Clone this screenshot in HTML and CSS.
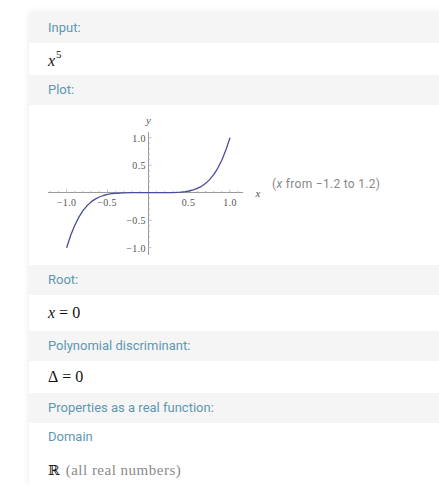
FILE: index.html
```html
<!DOCTYPE html>
<html>
<head>
<meta charset="utf-8">
<link rel="stylesheet" href="styles.css">
</head>
<body>
<div class="card">
  <div class="pod-head">Input:</div>
  <div class="pod-body math input-row"><span class="var">x</span><sup class="exp">5</sup></div>

  <div class="pod-head">Plot:</div>
  <div class="plot-row">
    <svg class="plot" width="243" height="160" viewBox="0 0 243 160">
      <g stroke="#9a9a9a" stroke-width="1" fill="none">
        <line x1="19" y1="87.5" x2="214" y2="87.5"/>
        <line x1="119.5" y1="27" x2="119.5" y2="150"/>
      </g>
      <g stroke="#b0b0b0" stroke-width="0.8">
        <line x1="37.6" y1="87.5" x2="37.6" y2="84.5"/>
        <line x1="78.5" y1="87.5" x2="78.5" y2="84.5"/>
        <line x1="160.2" y1="87.5" x2="160.2" y2="84.5"/>
        <line x1="201" y1="87.5" x2="201" y2="84.5"/>
        <line x1="21.3" y1="87.5" x2="21.3" y2="86"/>
        <line x1="29.5" y1="87.5" x2="29.5" y2="86"/>
        <line x1="45.8" y1="87.5" x2="45.8" y2="86"/>
        <line x1="54" y1="87.5" x2="54" y2="86"/>
        <line x1="62.1" y1="87.5" x2="62.1" y2="86"/>
        <line x1="70.3" y1="87.5" x2="70.3" y2="86"/>
        <line x1="86.6" y1="87.5" x2="86.6" y2="86"/>
        <line x1="94.8" y1="87.5" x2="94.8" y2="86"/>
        <line x1="103" y1="87.5" x2="103" y2="86"/>
        <line x1="111.1" y1="87.5" x2="111.1" y2="86"/>
        <line x1="127.5" y1="87.5" x2="127.5" y2="86"/>
        <line x1="135.6" y1="87.5" x2="135.6" y2="86"/>
        <line x1="143.8" y1="87.5" x2="143.8" y2="86"/>
        <line x1="152" y1="87.5" x2="152" y2="86"/>
        <line x1="168.3" y1="87.5" x2="168.3" y2="86"/>
        <line x1="176.5" y1="87.5" x2="176.5" y2="86"/>
        <line x1="184.7" y1="87.5" x2="184.7" y2="86"/>
        <line x1="192.8" y1="87.5" x2="192.8" y2="86"/>
        <line x1="209.2" y1="87.5" x2="209.2" y2="86"/>
        <line x1="119.5" y1="32.7" x2="122.5" y2="32.7"/>
        <line x1="119.5" y1="60.2" x2="122.5" y2="60.2"/>
        <line x1="119.5" y1="115.2" x2="122.5" y2="115.2"/>
        <line x1="119.5" y1="142.7" x2="122.5" y2="142.7"/>
        <line x1="119.5" y1="38.2" x2="121" y2="38.2"/>
        <line x1="119.5" y1="43.7" x2="121" y2="43.7"/>
        <line x1="119.5" y1="49.2" x2="121" y2="49.2"/>
        <line x1="119.5" y1="54.7" x2="121" y2="54.7"/>
        <line x1="119.5" y1="65.7" x2="121" y2="65.7"/>
        <line x1="119.5" y1="71.2" x2="121" y2="71.2"/>
        <line x1="119.5" y1="76.7" x2="121" y2="76.7"/>
        <line x1="119.5" y1="82.2" x2="121" y2="82.2"/>
        <line x1="119.5" y1="93.2" x2="121" y2="93.2"/>
        <line x1="119.5" y1="98.7" x2="121" y2="98.7"/>
        <line x1="119.5" y1="104.2" x2="121" y2="104.2"/>
        <line x1="119.5" y1="109.7" x2="121" y2="109.7"/>
        <line x1="119.5" y1="120.7" x2="121" y2="120.7"/>
        <line x1="119.5" y1="126.2" x2="121" y2="126.2"/>
        <line x1="119.5" y1="131.7" x2="121" y2="131.7"/>
        <line x1="119.5" y1="137.2" x2="121" y2="137.2"/>
      </g>
      <polyline fill="none" stroke="#4b4b9e" stroke-width="1.3" stroke-linejoin="round"
        points="37.6,142.7 41.7,130.3 45.8,120.2 49.9,112.1 53.9,105.7 58.0,100.8 62.1,96.9 66.2,94.1 70.3,92.0 74.4,90.5 78.5,89.4 82.5,88.7 86.6,88.3 94.8,87.8 103.0,87.7 119.3,87.7 135.6,87.7 143.8,87.6 152.0,87.1 156.1,86.7 160.2,86.0 164.2,84.9 168.3,83.4 172.4,81.3 176.5,78.5 180.6,74.6 184.7,69.7 188.7,63.3 192.8,55.2 196.9,45.1 201.0,32.7"/>
      <g class="tick-label">
        <text x="117" y="36.5" text-anchor="end">1.0</text>
        <text x="117" y="64" text-anchor="end">0.5</text>
        <text x="117" y="119" text-anchor="end">−0.5</text>
        <text x="117" y="146.5" text-anchor="end">−1.0</text>
        <text x="37.6" y="100.5" text-anchor="middle">−1.0</text>
        <text x="78" y="100.5" text-anchor="middle">−0.5</text>
        <text x="159.5" y="100.5" text-anchor="middle">0.5</text>
        <text x="201" y="100.5" text-anchor="middle">1.0</text>
      </g>
      <text class="axis-label" x="119.5" y="18.5" text-anchor="middle">y</text>
      <text class="axis-label" x="229" y="92" text-anchor="middle">x</text>
    </svg>
    <div class="plot-caption">(<i>x</i> from −1.2 to 1.2)</div>
  </div>

  <div class="pod-head">Root:</div>
  <div class="pod-body math root-row"><span class="var">x</span><span class="eq">=</span>0</div>

  <div class="pod-head">Polynomial discriminant:</div>
  <div class="pod-body math disc-row">Δ<span class="eq">=</span>0</div>

  <div class="pod-head">Properties as a real function:</div>
  <div class="sub-head">Domain</div>
  <div class="pod-body math domain-row"><span class="reals">ℝ</span> <span class="note">(all real numbers)</span></div>
</div>
</body>
</html>
```

FILE: styles.css
```css
html, body {
  margin: 0;
  padding: 0;
  background: #ffffff;
  overflow: hidden;
}

body {
  width: 439px;
  height: 485px;
  font-family: Roboto, "Liberation Sans", sans-serif;
}

.card {
  margin: 12px 0 0 29px;
  width: 430px;
  height: 473px;
  background: #ffffff;
  border-radius: 4px 0 0 0;
  box-shadow: 0 0 7px rgba(0, 0, 0, 0.09);
}

.pod-head {
  background: #f5f5f5;
  color: #5f97b3;
  font-size: 13px;
  line-height: 30px;
  height: 30px;
  padding-left: 19px;
}

.card > .pod-head:first-child {
  height: 31px;
  line-height: 31px;
  border-radius: 4px 0 0 0;
}

.pod-body {
  padding-left: 19px;
}

.math {
  font-family: "Liberation Serif", "DejaVu Serif", serif;
  font-size: 16px;
  color: #111;
}

.var {
  font-style: italic;
}

.eq {
  margin: 0 4px;
}

.input-row {
  height: 32px;
  line-height: 36px;
}

.exp {
  font-size: 11px;
  vertical-align: 0;
  position: relative;
  top: -8px;
  margin-left: 1px;
}

.plot-row {
  height: 160px;
  display: flex;
  align-items: flex-start;
}

.plot {
  display: block;
  flex: none;
}

.tick-label {
  font-family: "Liberation Serif", "DejaVu Serif", serif;
  font-size: 10px;
  fill: #555;
  letter-spacing: 0.4px;
}

.axis-label {
  font-family: "Liberation Serif", "DejaVu Serif", serif;
  font-style: italic;
  font-size: 11px;
  fill: #555;
}

.plot-caption {
  margin-top: 72px;
  font-size: 12px;
  line-height: 14px;
  color: #888;
  white-space: nowrap;
  letter-spacing: 0.3px;
}

.root-row {
  height: 36px;
  line-height: 36px;
}

.disc-row {
  height: 32px;
  line-height: 32px;
}

.sub-head {
  color: #5f97b3;
  font-size: 13px;
  height: 26px;
  line-height: 27px;
  padding-left: 19px;
}

.domain-row {
  padding-top: 13px;
  line-height: 16px;
}

.reals {
  font-family: "DejaVu Serif", serif;
  font-size: 14px;
}

.note {
  color: #8a8a8a;
  font-size: 15px;
  letter-spacing: 0.5px;
  margin-left: 2px;
}
```
